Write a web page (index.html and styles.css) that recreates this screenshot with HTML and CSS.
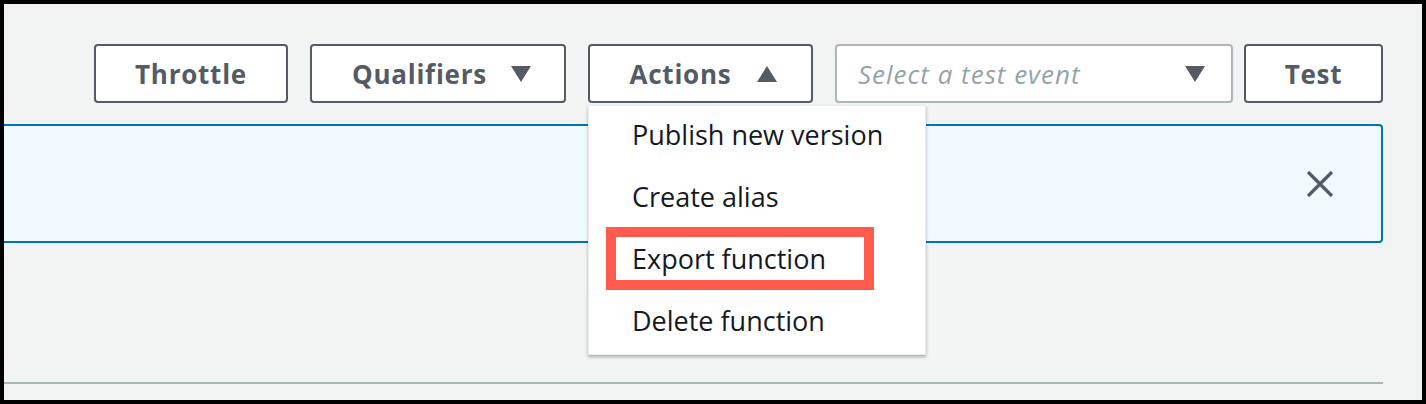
FILE: index.html
```html
<!DOCTYPE html>
<html lang="en">
  <head>
    <meta charset="UTF-8">
    <meta name="viewport" content="width=device-width, initial-scale=1.0">
    <title>Function actions</title>
    <link rel="stylesheet" href="styles.css">
  </head>
<body>
  <div class="page">
    <div class="toolbar">
      <button class="btn btn-throttle">Throttle</button>
      <button class="btn btn-qualifiers">Qualifiers <span class="caret"><svg width="20" height="16" viewBox="0 0 20 16"><polygon points="0,0 20,0 10,16" fill="#545b64"/></svg></span></button>
      <div class="actions">
        <button class="btn btn-actions">Actions <span class="caret"><svg width="20" height="16" viewBox="0 0 20 16"><polygon points="0,16 20,16 10,0" fill="#545b64"/></svg></span></button>
        <ul class="menu">
          <li>Publish new version</li>
          <li>Create alias</li>
          <li class="marked">Export function<span class="highlight"></span></li>
          <li>Delete function</li>
        </ul>
      </div>
      <div class="select">
        <span class="placeholder">Select a test event</span>
        <svg width="20" height="16" viewBox="0 0 20 16"><polygon points="0,0 20,0 10,16" fill="#545b64"/></svg>
      </div>
      <button class="btn btn-test">Test</button>
    </div>

    <div class="banner">
      <span class="close">
        <svg width="28" height="28" viewBox="0 0 28 28"><path d="M2 2 L26 26 M26 2 L2 26" stroke="#545b64" stroke-width="3.2" fill="none"/></svg>
      </span>
    </div>

    <div class="divider"></div>
  </div>
</body>
</html>
```

FILE: styles.css
```css
/* page frame */
body {
  margin: 0;
  background-color: #000;
  font-family: "Open Sans", "Noto Sans", Arial, sans-serif;
}

.page {
  margin: 4px;
  height: 396px;
  box-sizing: border-box;
  padding: 40px 39px 0 0;
  background-color: #f2f3f3;
  overflow: hidden;
}

/* top row of buttons */
.toolbar {
  display: flex;
  justify-content: flex-end;
  height: 59px;
}

.btn {
  height: 59px;
  box-sizing: border-box;
  border: 2px solid #545b64;
  border-radius: 4px;
  background-color: #fff;
  color: #545b64;
  font-family: inherit;
  font-size: 26px;
  font-weight: 700;
  letter-spacing: 0.75px;
  display: flex;
  align-items: center;
  justify-content: center;
  padding: 0;
  cursor: pointer;
}

.btn-throttle {
  width: 194px;
  margin-right: 22px;
}

.btn-qualifiers {
  width: 256px;
  margin-right: 22px;
  padding-left: 7px;
}

.btn-actions {
  width: 225px;
  padding-left: 6px;
}

.btn-test {
  width: 139px;
}

.caret {
  display: inline-flex;
  margin-left: 24px;
}

.btn-actions .caret {
  margin-left: 26px;
}

.actions {
  position: relative;
  margin-right: 22px;
}

/* dropdown menu */
.menu {
  position: absolute;
  top: 61px;
  left: 0;
  width: 336px;
  margin: 0;
  padding: 0;
  list-style: none;
  background-color: #fff;
  border: 1px solid #eaeded;
  box-shadow: 0 2px 3px rgba(0, 22, 30, 0.3);
  z-index: 2;
}

.menu li {
  position: relative;
  height: 62px;
  line-height: 58px;
  padding-left: 43px;
  font-size: 27px;
  color: #16191f;
}

.highlight {
  position: absolute;
  left: 17px;
  top: -3px;
  width: 268px;
  height: 63px;
  box-sizing: border-box;
  border: 10px solid #ff5b4f;
}

/* test event select */
.select {
  width: 398px;
  height: 59px;
  box-sizing: border-box;
  margin-right: 11px;
  border: 2px solid #aab7b8;
  border-radius: 4px;
  background-color: #fff;
  display: flex;
  align-items: center;
  justify-content: space-between;
  padding: 0 26px 0 21px;
}

.placeholder {
  font-size: 26px;
  font-style: italic;
  letter-spacing: 1px;
  color: #95a5a6;
}

/* info banner */
.banner {
  margin-top: 21px;
  height: 119px;
  box-sizing: border-box;
  border: 2px solid #0073bb;
  border-left: none;
  border-radius: 0 4px 4px 0;
  background-color: #f1faff;
  display: flex;
  align-items: center;
  justify-content: flex-end;
  padding-right: 47px;
}

.close {
  display: flex;
}

.divider {
  margin-top: 139px;
  height: 2px;
  background-color: #aab7b8;
}
```
